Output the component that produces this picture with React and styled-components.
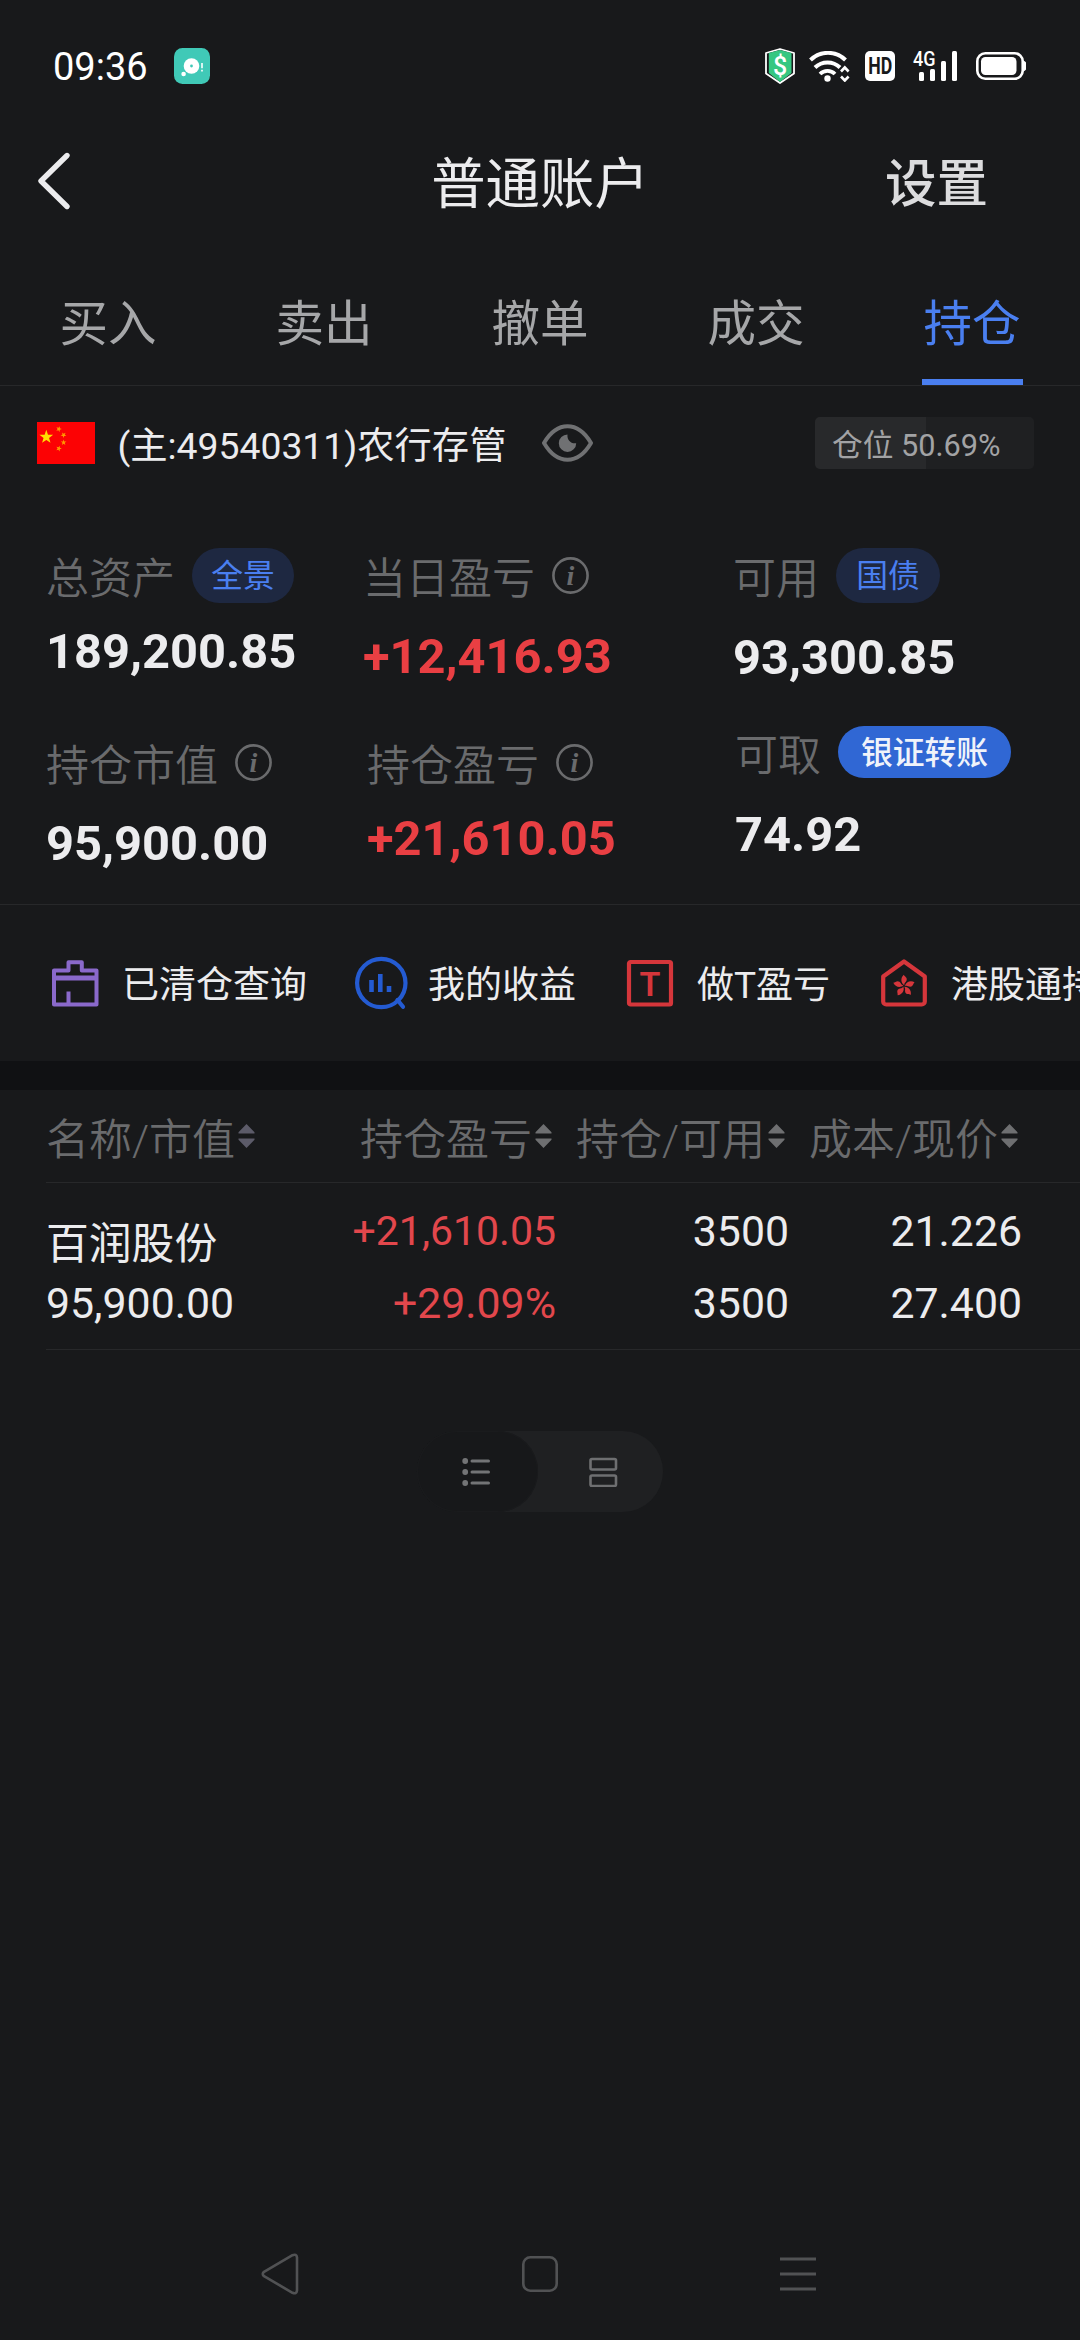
import React from 'react';
import styled, { createGlobalStyle } from 'styled-components';

const Global = createGlobalStyle`
  * { box-sizing: border-box; }
  body {
    margin: 0;
    background: #18191b;
    font-family: Roboto, "Noto Sans CJK SC", sans-serif;
    color: #ececee;
  }
  svg { display: block; flex: none; }
`;

const Screen = styled.div`
  width: 1080px;
  height: 2340px;
  display: flex;
  flex-direction: column;
  background: #18191b;
  overflow: hidden;
  white-space: nowrap;
`;

/* ---------- status bar ---------- */
const StatusBar = styled.div`
  height: 132px;
  padding: 0 54px 0 53px;
  display: flex;
  align-items: center;
`;
const Clock = styled.span`
  font-size: 38px;
  line-height: 44px;
  color: #fff;
  margin-right: 26px;
  margin-top: 1px;
`;
const StatusIcons = styled.div`
  margin-left: auto;
  display: flex;
  align-items: center;
  gap: 14px;
`;
const SignalGroup = styled.div`
  display: flex;
  align-items: center;
  gap: 19px;
  margin-left: 4px;
`;

/* ---------- header ---------- */
const Header = styled.header`
  height: 97px;
  padding: 0 92px 0 36px;
  display: grid;
  grid-template-columns: 1fr auto 1fr;
  align-items: center;
`;
const Title = styled.h1`
  margin: 8px 0 0 56px;
  font-size: 54.4px;
  line-height: 70px;
  font-weight: 400;
`;
const HeaderAction = styled.span`
  justify-self: end;
  margin-top: 8px;
  font-size: 51.5px;
  line-height: 70px;
  font-weight: 500;
  color: #dcdcde;
`;

/* ---------- tabs ---------- */
const Tabs = styled.nav`
  height: 157px;
  display: grid;
  grid-template-columns: repeat(5, 1fr);
  border-bottom: 1px solid #27282a;
`;
const Tab = styled.div`
  display: flex;
  flex-direction: column;
  align-items: center;
  padding-top: 66px;
  font-size: 48.5px;
  line-height: 60px;
  color: ${(p) => (p.$active ? '#4a7ff0' : '#a6a7a9')};
  &::after {
    content: '';
    width: 101px;
    height: 6px;
    margin-top: auto;
    background: ${(p) => (p.$active ? '#4a7ff0' : 'transparent')};
  }
`;

/* ---------- account ---------- */
const AccountRow = styled.div`
  height: 114px;
  padding: 0 46px 0 37px;
  display: flex;
  align-items: center;
`;
const AccountName = styled.span`
  margin: 5px 36px 0 22.5px;
  font-size: 37.3px;
  line-height: 50px;
`;
const Position = styled.div`
  margin-left: auto;
  width: 219px;
  height: 52px;
  padding: 3px 0 0 17px;
  border-radius: 5px;
  background: linear-gradient(90deg, #28292b 50.69%, #1f2022 50.69%);
  font-size: 30.7px;
  line-height: 52px;
  color: #a2a3a5;
`;

/* ---------- metrics ---------- */
const Metrics = styled.section`
  height: 405px;
  padding: 47px 0 0 46px;
  display: grid;
  grid-template-columns: 317px 370px 1fr;
  grid-template-rows: 177px 180px;
  border-bottom: 1px solid #27282a;
`;
const Metric = styled.div`
  padding-top: ${(p) => p.$top || 0}px;
  padding-left: ${(p) => p.$indent || 0}px;
`;
const MetricHead = styled.div`
  height: 56px;
  display: flex;
  align-items: center;
  gap: 17px;
`;
const MetricLabel = styled.span`
  margin-top: 7px;
  font-size: 43px;
  line-height: 56px;
  font-weight: 350;
  color: #6a6b6d;
`;
const MetricValue = styled.div`
  margin-top: ${(p) => p.$gap}px;
  font-size: 48.8px;
  line-height: 58px;
  font-weight: 700;
  color: ${(p) => (p.$up ? '#e93f43' : '#ececee')};
`;
const Pill = styled.span`
  width: ${(p) => p.$w}px;
  height: ${(p) => (p.$solid ? 52 : 55)}px;
  padding-top: 2px;
  border-radius: 28px;
  text-align: center;
  font-size: 31.8px;
  line-height: ${(p) => (p.$solid ? 50 : 53)}px;
  font-weight: ${(p) => (p.$solid ? 500 : 400)};
  background: ${(p) => (p.$solid ? '#3067d4' : '#1e2841')};
  color: ${(p) => (p.$solid ? '#f0f3fa' : '#4a7ff0')};
`;

/* ---------- shortcuts ---------- */
const Shortcuts = styled.section`
  height: 156px;
  padding-left: 48px;
  display: flex;
  align-items: center;
  gap: 47px;
  overflow: hidden;
`;
const Shortcut = styled.div`
  flex: none;
  display: flex;
  align-items: center;
  gap: 20px;
`;
const ShortcutLabel = styled.span`
  margin-top: 5px;
  font-size: 37px;
  line-height: 50px;
`;
const Band = styled.div`
  height: 29px;
  background: #101113;
`;

/* ---------- holdings ---------- */
const Holdings = styled.section`
  margin-left: 46px;
`;
const HoldingsRow = styled.div`
  display: grid;
  grid-template-columns: 300px 210px 233px 233px;
  height: ${(p) => p.$h}px;
  border-bottom: 1px solid #27282a;
`;
const HeadCell = styled.div`
  display: flex;
  align-items: center;
  justify-content: ${(p) => (p.$left ? 'flex-start' : 'flex-end')};
  gap: 3px;
  padding-right: 4px;
  font-size: 43px;
  line-height: 56px;
  font-weight: 350;
  color: #6a6b6d;
`;
const HeadText = styled.span`
  margin-top: 7px;
`;
const Cell = styled.div`
  display: flex;
  flex-direction: column;
  align-items: ${(p) => (p.$left ? 'flex-start' : 'flex-end')};
  gap: ${(p) => (p.$left ? 9 : 22)}px;
  padding-top: ${(p) => (p.$left ? 36 : 23)}px;
  font-size: 43px;
  line-height: 50px;
  color: ${(p) => (p.$up ? '#e2474c' : '#ececee')};
`;
const Line = styled.span`
  font-size: ${(p) => p.$size || 42.8}px;
`;

/* ---------- view switch ---------- */
const Switch = styled.div`
  align-self: center;
  margin: 81px 0 0 0;
  width: 246px;
  height: 81px;
  display: flex;
  border-radius: 41px;
  background: #1f2022;
`;
const SwitchOption = styled.div`
  flex: ${(p) => (p.$on ? '0 0 121px' : '1')};
  display: flex;
  align-items: center;
  justify-content: center;
  padding: ${(p) => (p.$on ? '0 3px 0 0' : '0 0 0 5px')};
  border-radius: 41px;
  background: ${(p) => (p.$on ? '#17181a' : 'transparent')};
  box-shadow: ${(p) => (p.$on ? 'inset 0 0 0 1px #1a1b1d' : 'none')};
`;

const NavBar = styled.div`
  margin-top: auto;
  height: 132px;
  display: grid;
  grid-template-columns: 260px 260px 256px;
  padding-left: 150px;
  align-items: center;
  justify-items: center;
`;

const Info = () => (
  <svg width="37" height="37" viewBox="0 0 37 37">
    <circle cx="18.5" cy="18.5" r="17.1" fill="none" stroke="#6a6b6d" strokeWidth="2.6" />
    <text x="18.5" y="27.5" textAnchor="middle" fontFamily="Liberation Serif, serif" fontStyle="italic" fontWeight="700" fontSize="28" fill="#6a6b6d">i</text>
  </svg>
);

const Sort = ({ color = '#6e6f71' }) => (
  <svg width="17" height="24" viewBox="0 0 17 24">
    <path d="M8.5 0 16.5 8.2v1.4H.5V8.2zM8.5 24 16.5 15.8v-1.4H.5v1.4z" fill={color} />
  </svg>
);

const AppBadge = () => (
  <svg width="36" height="36" viewBox="0 0 36 36">
    <rect width="36" height="36" rx="8.5" fill="#40c9b7" />
    <circle cx="17.5" cy="18" r="7.8" fill="#fff" />
    <circle cx="17.5" cy="18" r="1.4" fill="#40c9b7" />
    <circle cx="9.6" cy="26" r="2.3" fill="#fff" />
    <path d="M28 15v5.2M28 21.8v1.6" stroke="#fff" strokeWidth="1.6" />
  </svg>
);

const Shield = () => (
  <svg width="30" height="36" viewBox="0 0 30 36">
    <path d="M15 1 29 5v20.5L15 35 1 25.5V5z" fill="#18191b" stroke="#fff" strokeWidth="1.8" strokeLinejoin="round" />
    <path d="M15 2 26.5 5v20L15 34 3.8 25V5z" fill="#35c781" />
    <text x="15" y="26.5" textAnchor="middle" fontFamily="Roboto, sans-serif" fontWeight="500" fontSize="25" fill="#fff">$</text>
  </svg>
);

const Wifi = () => (
  <svg width="42" height="31" viewBox="0 0 42 31" fill="none" stroke="#fff">
    <path d="M1.5 9A25 25 0 0 1 36.5 9" strokeWidth="4" />
    <path d="M6 16.5A18 18 0 0 1 31 16.5" strokeWidth="4" />
    <path d="M11 23A10.5 10.5 0 0 1 26 23" strokeWidth="3.8" />
    <circle cx="18.5" cy="27.5" r="3.2" fill="#fff" stroke="none" />
    <path d="M32 20.5 35.8 16.5 39.6 20.5M32 25.5 35.8 29.5 39.6 25.5" strokeWidth="2.6" />
  </svg>
);

const Hd = () => (
  <svg width="30" height="30" viewBox="0 0 30 30">
    <rect width="30" height="30" rx="5" fill="#fff" />
    <text x="3.2" y="23.2" textLength="24" lengthAdjust="spacingAndGlyphs" fontFamily="Roboto, sans-serif" fontWeight="700" fontSize="23" fill="#18191b">HD</text>
  </svg>
);

const Signal = () => (
  <svg width="44" height="30" viewBox="0 0 44 30" overflow="visible">
    <text x="0" y="14.8" textLength="22.5" lengthAdjust="spacingAndGlyphs" fontFamily="Roboto, sans-serif" fontWeight="500" fontSize="20" fill="#fff">4G</text>
    <g fill="#fff">
      <rect x="6" y="21" width="5" height="9" rx="1.5" />
      <rect x="17" y="18" width="5" height="12" rx="1.5" />
      <rect x="28" y="10" width="5" height="20" rx="1.5" />
      <rect x="39" y="0" width="5" height="30" rx="1.5" />
    </g>
  </svg>
);

const Battery = () => (
  <svg width="50" height="28" viewBox="0 0 50 28">
    <rect x="1.3" y="1.3" width="45.4" height="25.4" rx="8" fill="none" stroke="#fff" strokeWidth="2.6" />
    <rect x="5" y="5" width="35.5" height="18" rx="4.5" fill="#fff" />
    <path d="M47.5 9.5a5 5 0 0 1 0 9z" fill="#fff" stroke="#fff" strokeWidth="1.5" />
  </svg>
);

const Back = () => (
  <svg width="36" height="60" viewBox="0 0 36 60" fill="none" stroke="#ececee" strokeWidth="5.4" strokeLinecap="round" strokeLinejoin="round">
    <path d="M31 4.5 5 30 31 55.5" />
  </svg>
);

const star = (cx, cy, r, rot = 0) =>
  Array.from({ length: 10 }, (_, i) => {
    const a = ((i * 36 - 90 + rot) * Math.PI) / 180;
    const d = i % 2 ? r * 0.4 : r;
    return `${(cx + d * Math.cos(a)).toFixed(2)},${(cy + d * Math.sin(a)).toFixed(2)}`;
  }).join(' ');

const Flag = () => (
  <svg width="58" height="42" viewBox="0 0 58 42">
    <rect width="58" height="42" fill="#fc0204" />
    <polygon points={star(9.3, 15, 7.2)} fill="#ffde00" />
    <g fill="#ff9a00">
      <polygon points={star(21.8, 7, 3, 20)} />
      <polygon points={star(26.6, 13, 3, 40)} />
      <polygon points={star(26.6, 20.5, 3)} />
      <polygon points={star(21.8, 26.5, 3, 20)} />
    </g>
  </svg>
);

const Eye = () => (
  <svg width="51" height="38" viewBox="0 0 51 38">
    <path d="M2 19C8.5 8 16.5 2.3 25.5 2.3S42.5 8 49 19C42.5 30 34.5 35.7 25.5 35.7S8.5 30 2 19z" fill="none" stroke="#707173" strokeWidth="4" strokeLinejoin="round" />
    <path d="M25.5 10.5A8.7 8.7 0 1 0 34.2 19.2C29 20 24.8 16 25.5 10.5z" fill="#707173" />
  </svg>
);

const Cleared = () => (
  <svg width="54" height="54" viewBox="-3 -3.5 54 54" fill="none" stroke="#8a69cb" strokeWidth="4" strokeLinejoin="round">
    <path d="M17.5 11H3V45H45.5V11H30.8V2.8H17.5Z" />
    <path d="M3 18.5H45.5" strokeWidth="5" />
    <path d="M17.5 32V45" />
  </svg>
);

const Profit = () => (
  <svg width="54" height="54" viewBox="0 0 54 54">
    <circle cx="27.3" cy="27" r="24.2" fill="none" stroke="#245bd2" strokeWidth="4.2" />
    <path d="M43.5 44 49 50.8" stroke="#245bd2" strokeWidth="4.2" strokeLinecap="round" />
    <path d="M17.5 24v12M26.3 18v18M35 30v6" stroke="#245bd2" strokeWidth="4.6" />
  </svg>
);

const TTrade = () => (
  <svg width="54" height="54" viewBox="0 0 54 54">
    <rect x="6" y="6" width="42" height="42.5" rx="1.5" fill="none" stroke="#d5363b" strokeWidth="4.2" />
    <text x="27" y="39.5" textAnchor="middle" fontFamily="Roboto, sans-serif" fontWeight="600" fontSize="34" fill="#d5363b">T</text>
  </svg>
);

const HongKong = () => (
  <svg width="54" height="54" viewBox="0 0 54 54">
    <path d="M27 5.5 47.8 20.5V45.5a3 3 0 0 1-3 3H9.2a3 3 0 0 1-3-3V20.5Z" fill="none" stroke="#d5363b" strokeWidth="4.2" strokeLinejoin="round" />
    {[0, 72, 144, 216, 288].map((a) => (
      <path key={a} d="M27.3 29.2C23.6 26.8 23.4 21.8 26.8 18.8 27.6 20.8 30.6 21.4 29.6 24.4 28.8 26.4 27 26.8 27.3 29.2z" fill="#d5363b" transform={`rotate(${a} 27 30)`} />
    ))}
  </svg>
);

const ListIcon = () => (
  <svg width="28" height="30" viewBox="0 0 28 30">
    {[4, 15, 26].map((y) => (
      <g key={y}>
        <circle cx="3.2" cy={y} r="2.9" fill="#737476" />
        <path d={`M10 ${y}H26.5`} stroke="#737476" strokeWidth="3" strokeLinecap="round" />
      </g>
    ))}
  </svg>
);

const CardsIcon = () => (
  <svg width="29" height="30" viewBox="0 0 29 30" fill="none" stroke="#6e6f71" strokeWidth="2.6">
    <rect x="1.5" y="2" width="25.5" height="10.5" rx="1.5" />
    <rect x="1.5" y="18.5" width="25.5" height="10.5" rx="1.5" />
  </svg>
);

const tabs = ['买入', '卖出', '撤单', '成交', '持仓'];
const shortcuts = [
  ['已清仓查询', Cleared],
  ['我的收益', Profit],
  ['做T盈亏', TTrade],
  ['港股通持仓', HongKong],
];
const metrics = [
  { label: '总资产', pill: '全景', w: 102, value: '189,200.85', gap: 20 },
  { label: '当日盈亏', value: '+12,416.93', gap: 25, up: true },
  { label: '可用', pill: '国债', w: 104, value: '93,300.85', gap: 26 },
  { label: '持仓市值', value: '95,900.00', gap: 25, top: 10 },
  { label: '持仓盈亏', value: '+21,610.05', gap: 20, up: true, top: 10, indent: 4 },
  { label: '可取', pill: '银证转账', w: 173, solid: true, value: '74.92', gap: 26, indent: 2 },
];
const columns = ['名称/市值', '持仓盈亏', '持仓/可用', '成本/现价'];

export default function App() {
  return (
    <>
      <Global />
      <Screen>
        <StatusBar>
          <Clock>09:36</Clock>
          <AppBadge />
          <StatusIcons>
            <Shield />
            <Wifi />
            <Hd />
            <SignalGroup>
              <Signal />
              <Battery />
            </SignalGroup>
          </StatusIcons>
        </StatusBar>

        <Header>
          <Back />
          <Title>普通账户</Title>
          <HeaderAction>设置</HeaderAction>
        </Header>

        <Tabs>
          {tabs.map((t) => (
            <Tab key={t} $active={t === '持仓'}>{t}</Tab>
          ))}
        </Tabs>

        <AccountRow>
          <Flag />
          <AccountName>(主:49540311)农行存管</AccountName>
          <Eye />
          <Position>仓位 50.69%</Position>
        </AccountRow>

        <Metrics>
          {metrics.map((m) => (
            <Metric key={m.label} $top={m.top} $indent={m.indent}>
              <MetricHead>
                <MetricLabel>{m.label}</MetricLabel>
                {m.pill ? <Pill $w={m.w} $solid={m.solid}>{m.pill}</Pill> : <Info />}
              </MetricHead>
              <MetricValue $gap={m.gap} $up={m.up}>{m.value}</MetricValue>
            </Metric>
          ))}
        </Metrics>

        <Shortcuts>
          {shortcuts.map(([label, Icon]) => (
            <Shortcut key={label}>
              <Icon />
              <ShortcutLabel>{label}</ShortcutLabel>
            </Shortcut>
          ))}
        </Shortcuts>
        <Band />

        <Holdings>
          <HoldingsRow $h={93}>
            {columns.map((c, i) => (
              <HeadCell key={c} $left={i === 0}>
                <HeadText>{c}</HeadText>
                <Sort color={i === 0 ? '#5c5b69' : undefined} />
              </HeadCell>
            ))}
          </HoldingsRow>
          <HoldingsRow $h={167}>
            <Cell $left>
              <Line>百润股份</Line>
              <Line>95,900.00</Line>
            </Cell>
            <Cell $up>
              <Line $size={41}>+21,610.05</Line>
              <Line>+29.09%</Line>
            </Cell>
            <Cell>
              <Line>3500</Line>
              <Line>3500</Line>
            </Cell>
            <Cell>
              <Line>21.226</Line>
              <Line>27.400</Line>
            </Cell>
          </HoldingsRow>
        </Holdings>

        <Switch>
          <SwitchOption $on><ListIcon /></SwitchOption>
          <SwitchOption><CardsIcon /></SwitchOption>
        </Switch>

        <NavBar>
          <svg width="38" height="42" viewBox="0 0 38 42" fill="none" stroke="#515254" strokeWidth="2.6" strokeLinejoin="round">
            <path d="M31.5 2.2Q35.5.5 36 4.5V37.5Q35.5 41.5 31.5 39.8L3 23.2Q.5 21 3 18.8Z" />
          </svg>
          <svg width="36" height="36" viewBox="0 0 36 36" fill="none" stroke="#515254" strokeWidth="2.6">
            <rect x="1.3" y="1.3" width="33.4" height="33.4" rx="7" />
          </svg>
          <svg width="36" height="34" viewBox="0 0 36 34" stroke="#515254" strokeWidth="3">
            <path d="M0 2H36M0 17H36M0 32H36" />
          </svg>
        </NavBar>
      </Screen>
    </>
  );
}
